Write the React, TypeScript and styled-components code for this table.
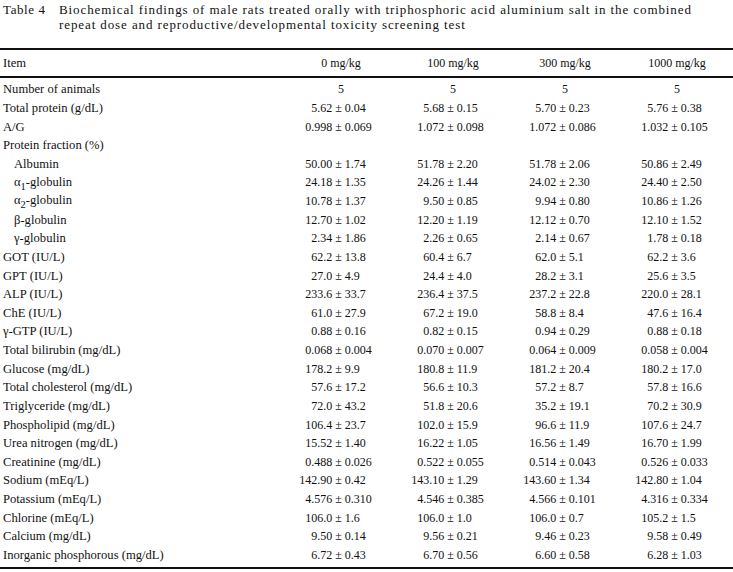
import React from "react";
import styled, { createGlobalStyle } from "styled-components";

const Global = createGlobalStyle`
  html, body { margin: 0; padding: 0; background: #fff; }
  body { font-family: "Liberation Serif", "Times New Roman", serif; color: #111; }
`;

const Page = styled.div`
  width: 733px;
  font-size: 12px;
`;

const Caption = styled.div`
  display: flex;
  padding: 2px 0 0 3px;
  font-size: 13px;
  line-height: 15px;
  height: 48px;
  box-sizing: border-box;
`;

const CaptionLabel = styled.div`
  flex: 0 0 56px;
  letter-spacing: 0.6px;
`;

const CaptionText = styled.div`
  flex: 1;
  letter-spacing: 0.9px;
  white-space: nowrap;
`;

const CaptionLine = styled.div``;

const Table = styled.div`
  border-top: 2px solid #111;
  border-bottom: 2px solid #111;
`;

const HeaderRow = styled.div`
  display: grid;
  grid-template-columns: 285px repeat(4, 112px);
  height: 26px;
  align-items: center;
  border-bottom: 2px solid #111;
`;

const Body = styled.div`
  padding: 2.5px 0 2px;
`;

const Row = styled.div`
  display: grid;
  grid-template-columns: 285px repeat(4, 112px);
  height: 18.64px;
  align-items: center;
`;

const Label = styled.div<{ $indent?: boolean }>`
  padding-left: ${(p) => (p.$indent ? "14px" : "3px")};
  font-size: 12.6px;
  white-space: nowrap;
`;

const HeadCell = styled.div`
  text-align: center;
`;

const ValueCell = styled.div`
  display: grid;
  grid-template-columns: 1fr auto 1fr;
  column-gap: 3px;
  padding-right: 5px;
  white-space: nowrap;
`;

const Mean = styled.span`
  text-align: right;
`;

const Pm = styled.span``;

const Sd = styled.span``;

const Count = styled.div`
  text-align: center;
`;

type Item = {
  label: React.ReactNode;
  indent?: boolean;
  values?: string[];
  count?: string;
};

const items: Item[] = [
  { label: "Number of animals", count: "5" },
  { label: "Total protein (g/dL)", values: ["5.62±0.04", "5.68±0.15", "5.70±0.23", "5.76±0.38"] },
  { label: "A/G", values: ["0.998±0.069", "1.072±0.098", "1.072±0.086", "1.032±0.105"] },
  { label: "Protein fraction (%)" },
  { label: "Albumin", indent: true, values: ["50.00±1.74", "51.78±2.20", "51.78±2.06", "50.86±2.49"] },
  { label: <>α<sub>1</sub>-globulin</>, indent: true, values: ["24.18±1.35", "24.26±1.44", "24.02±2.30", "24.40±2.50"] },
  { label: <>α<sub>2</sub>-globulin</>, indent: true, values: ["10.78±1.37", "9.50±0.85", "9.94±0.80", "10.86±1.26"] },
  { label: "β-globulin", indent: true, values: ["12.70±1.02", "12.20±1.19", "12.12±0.70", "12.10±1.52"] },
  { label: "γ-globulin", indent: true, values: ["2.34±1.86", "2.26±0.65", "2.14±0.67", "1.78±0.18"] },
  { label: "GOT (IU/L)", values: ["62.2±13.8", "60.4±6.7", "62.0±5.1", "62.2±3.6"] },
  { label: "GPT (IU/L)", values: ["27.0±4.9", "24.4±4.0", "28.2±3.1", "25.6±3.5"] },
  { label: "ALP (IU/L)", values: ["233.6±33.7", "236.4±37.5", "237.2±22.8", "220.0±28.1"] },
  { label: "ChE (IU/L)", values: ["61.0±27.9", "67.2±19.0", "58.8±8.4", "47.6±16.4"] },
  { label: "γ-GTP (IU/L)", values: ["0.88±0.16", "0.82±0.15", "0.94±0.29", "0.88±0.18"] },
  { label: "Total bilirubin (mg/dL)", values: ["0.068±0.004", "0.070±0.007", "0.064±0.009", "0.058±0.004"] },
  { label: "Glucose (mg/dL)", values: ["178.2±9.9", "180.8±11.9", "181.2±20.4", "180.2±17.0"] },
  { label: "Total cholesterol (mg/dL)", values: ["57.6±17.2", "56.6±10.3", "57.2±8.7", "57.8±16.6"] },
  { label: "Triglyceride (mg/dL)", values: ["72.0±43.2", "51.8±20.6", "35.2±19.1", "70.2±30.9"] },
  { label: "Phospholipid (mg/dL)", values: ["106.4±23.7", "102.0±15.9", "96.6±11.9", "107.6±24.7"] },
  { label: "Urea nitrogen (mg/dL)", values: ["15.52±1.40", "16.22±1.05", "16.56±1.49", "16.70±1.99"] },
  { label: "Creatinine (mg/dL)", values: ["0.488±0.026", "0.522±0.055", "0.514±0.043", "0.526±0.033"] },
  { label: "Sodium (mEq/L)", values: ["142.90±0.42", "143.10±1.29", "143.60±1.34", "142.80±1.04"] },
  { label: "Potassium (mEq/L)", values: ["4.576±0.310", "4.546±0.385", "4.566±0.101", "4.316±0.334"] },
  { label: "Chlorine (mEq/L)", values: ["106.0±1.6", "106.0±1.0", "106.0±0.7", "105.2±1.5"] },
  { label: "Calcium (mg/dL)", values: ["9.50±0.14", "9.56±0.21", "9.46±0.23", "9.58±0.49"] },
  { label: "Inorganic phosphorous (mg/dL)", values: ["6.72±0.43", "6.70±0.56", "6.60±0.58", "6.28±1.03"] },
];

const doses = ["0 mg/kg", "100 mg/kg", "300 mg/kg", "1000 mg/kg"];

function Value({ v }: { v: string }) {
  const [m, s] = v.split("±");
  return (
    <ValueCell>
      <Mean>{m}</Mean>
      <Pm>±</Pm>
      <Sd>{s}</Sd>
    </ValueCell>
  );
}

export default function App() {
  return (
    <Page>
      <Global />
      <Caption>
        <CaptionLabel>Table 4</CaptionLabel>
        <CaptionText>
          <CaptionLine>
            Biochemical findings of male rats treated orally with triphosphoric acid aluminium salt in the combined
          </CaptionLine>
          <CaptionLine>repeat dose and reproductive/developmental toxicity screening test</CaptionLine>
        </CaptionText>
      </Caption>
      <Table>
        <HeaderRow>
          <Label>Item</Label>
          {doses.map((d) => (
            <HeadCell key={d}>{d}</HeadCell>
          ))}
        </HeaderRow>
        <Body>
          {items.map((it, i) => (
            <Row key={i}>
              <Label $indent={it.indent}>{it.label}</Label>
              {it.count
                ? doses.map((d) => <Count key={d}>{it.count}</Count>)
                : it.values
                ? it.values.map((v, j) => <Value key={j} v={v} />)
                : null}
            </Row>
          ))}
        </Body>
      </Table>
    </Page>
  );
}
